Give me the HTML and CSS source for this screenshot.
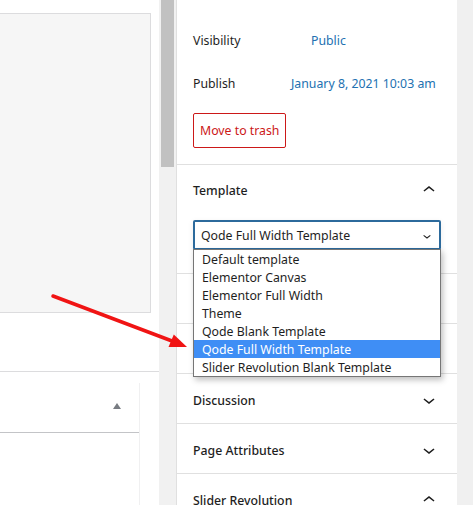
FILE: index.html
```html
<!DOCTYPE html>
<html lang="en">
<head>
<meta charset="utf-8">
<title>Template panel</title>
<link rel="stylesheet" href="styles.css">
</head>
<body>
<div class="page">
  <div class="main">
    <div class="canvas"></div>
    <div class="meta-area">
      <div class="metabox">
        <div class="metabox-head"><span class="toggle-tri"></span></div>
      </div>
    </div>
  </div>
  <div class="scrollbar"><div class="thumb"></div></div>
  <aside class="sidebar">
    <div class="panel summary">
      <div class="row"><span class="label">Visibility</span><span class="value public">Public</span></div>
      <div class="row"><span class="label">Publish</span><span class="value">January 8, 2021 10:03 am</span></div>
      <button class="trash">Move to trash</button>
    </div>
    <div class="panel template">
      <div class="panel-head"><span>Template</span>
        <svg class="chev" viewBox="0 0 24 24" width="24" height="24"><path d="M6.5 12.4L12 8l5.5 4.4-.9 1.2L12 10l-4.6 3.6-1-1.2z"/></svg>
      </div>
      <div class="select-wrap">
        <div class="select"><span>Qode Full Width Template</span>
          <svg class="sel-chev" viewBox="0 0 24 24" width="16" height="16"><path d="M17.5 11.6L12 16l-5.5-4.4.9-1.2L12 14l4.5-3.6 1 1.2z"/></svg>
        </div>
        <ul class="dropdown">
          <li>Default template</li>
          <li>Elementor Canvas</li>
          <li>Elementor Full Width</li>
          <li>Theme</li>
          <li>Qode Blank Template</li>
          <li class="active">Qode Full Width Template</li>
          <li>Slider Revolution Blank Template</li>
        </ul>
      </div>
    </div>
    <div class="panel empty"></div>
    <div class="panel empty"></div>
    <div class="panel">
      <div class="panel-head"><span>Discussion</span>
        <svg class="chev" viewBox="0 0 24 24" width="24" height="24"><path d="M17.5 11.6L12 16l-5.5-4.4.9-1.2L12 14l4.5-3.6 1 1.2z"/></svg>
      </div>
    </div>
    <div class="panel">
      <div class="panel-head"><span>Page Attributes</span>
        <svg class="chev" viewBox="0 0 24 24" width="24" height="24"><path d="M17.5 11.6L12 16l-5.5-4.4.9-1.2L12 14l4.5-3.6 1 1.2z"/></svg>
      </div>
    </div>
    <div class="panel">
      <div class="panel-head"><span>Slider Revolution</span>
        <svg class="chev" viewBox="0 0 24 24" width="24" height="24"><path d="M6.5 12.4L12 8l5.5 4.4-.9 1.2L12 10l-4.6 3.6-1-1.2z"/></svg>
      </div>
    </div>
  </aside>
  <div class="gutter"></div>
  <svg class="arrow" viewBox="0 0 473 505" width="473" height="505">
    <line x1="53" y1="296" x2="172" y2="341" stroke="#f01414" stroke-width="3.5" stroke-linecap="round"/>
    <polygon points="187,347 168.5,347 173.8,334.5" fill="#f01414"/>
  </svg>
</div>
</body>
</html>
```
FILE: styles.css
```css
* { box-sizing: border-box; }
html, body { margin: 0; padding: 0; }
body {
  font-family: "Noto Sans", "Open Sans", sans-serif;
  font-size: 12.3px;
  color: #1e1e1e;
  background: #fff;
}
.page {
  position: relative;
  display: flex;
  width: 473px;
  height: 505px;
  overflow: hidden;
}
.main {
  width: 159px;
  flex: none;
  background: #fff;
}
.canvas {
  margin-top: 13px;
  width: 151px;
  height: 300px;
  background: #f6f6f6;
  border: 1px solid #dcdcde;
  border-left: none;
}
.meta-area {
  margin-top: 58px;
  border-top: 1px solid #dcdcde;
  padding-top: 11px;
}
.metabox {
  width: 140px;
  height: 150px;
  border-right: 1px solid #f0f0f1;
}
.metabox-head {
  height: 50px;
  border-bottom: 1px solid #c3c4c7;
  display: flex;
  align-items: center;
  justify-content: flex-end;
  padding-right: 18px;
}
.toggle-tri {
  width: 0;
  height: 0;
  border-left: 4px solid transparent;
  border-right: 4px solid transparent;
  border-bottom: 6px solid #787c82;
  margin-top: -3px;
}
.scrollbar {
  width: 17px;
  flex: none;
  background: #f1f1f1;
}
.thumb {
  margin-left: 2px;
  width: 13px;
  height: 167px;
  background: #c1c1c1;
}
.sidebar {
  width: 281px;
  flex: none;
  background: #fff;
  border-left: 1px solid #e0e0e0;
}
.gutter {
  flex: 1;
  background: #f0f0f0;
}
.panel {
  border-bottom: 1px solid #e0e0e0;
}
.summary {
  padding: 22px 16px 16px;
}
.row {
  height: 36px;
  display: flex;
  align-items: center;
  margin-bottom: 7px;
}
.row:nth-child(2) { margin-bottom: 12px; }
.label {
  width: 98px;
  flex: none;
}
.value {
  color: #2271b1;
  white-space: nowrap;
}
.value.public { padding-left: 20px; }
.trash {
  display: block;
  height: 35px;
  padding: 0 6px;
  font: inherit;
  color: #cc1818;
  background: #fff;
  border: 1px solid #cc1818;
  border-radius: 2px;
}
.panel-head {
  height: 49px;
  padding: 3px 16px 0;
  display: flex;
  align-items: center;
  justify-content: space-between;
  font-weight: 500;
}
.chev { fill: #1e1e1e; flex: none; }
.template { padding-bottom: 23px; }
.template .panel-head { height: 50px; margin-bottom: 5px; padding-top: 0; }
.select-wrap {
  position: relative;
  margin: 0 16px;
}
.select {
  height: 30px;
  border: 2px solid #2c6a9c;
  border-radius: 2px;
  display: flex;
  align-items: center;
  justify-content: space-between;
  padding: 1px 4px 0 6px;
  box-shadow: 0 2px 6px rgba(0,0,0,0.08);
}
.sel-chev { fill: #1e1e1e; }
.dropdown {
  position: absolute;
  left: 0;
  top: 29px;
  width: 248px;
  margin: 0;
  padding: 0;
  list-style: none;
  background: #fff;
  border: 1px solid #767676;
  box-shadow: 2px 3px 6px rgba(0,0,0,0.25);
  z-index: 5;
}
.dropdown li {
  height: 18px;
  line-height: 16px;
  padding: 2px 0 0 8px;
  white-space: nowrap;
}
.dropdown li.active {
  background: #3f8ef5;
  color: #fff;
}
.empty { height: 50px; }
.arrow {
  position: absolute;
  left: 0;
  top: 0;
  pointer-events: none;
  z-index: 10;
}
```
